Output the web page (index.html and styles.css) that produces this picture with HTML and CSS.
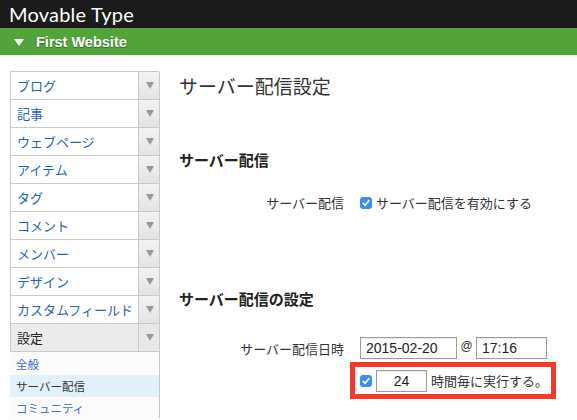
FILE: index.html
```html
<!DOCTYPE html>
<html lang="ja">
<head>
<meta charset="utf-8">
<title>サーバー配信設定 | Movable Type</title>
<link rel="stylesheet" href="styles.css">
</head>
<body>
<header class="topbar"><span class="brand">Movable Type</span></header>
<div class="sitebar"><span class="site-caret"></span><span class="site-name">First Website</span></div>
<div class="layout">
  <nav class="sidebar">
    <ul class="menu">
      <li class="menu-item"><span class="menu-label">ブログ</span><span class="menu-toggle"><i class="caret"></i></span></li>
      <li class="menu-item"><span class="menu-label">記事</span><span class="menu-toggle"><i class="caret"></i></span></li>
      <li class="menu-item"><span class="menu-label">ウェブページ</span><span class="menu-toggle"><i class="caret"></i></span></li>
      <li class="menu-item"><span class="menu-label">アイテム</span><span class="menu-toggle"><i class="caret"></i></span></li>
      <li class="menu-item"><span class="menu-label">タグ</span><span class="menu-toggle"><i class="caret"></i></span></li>
      <li class="menu-item"><span class="menu-label">コメント</span><span class="menu-toggle"><i class="caret"></i></span></li>
      <li class="menu-item"><span class="menu-label">メンバー</span><span class="menu-toggle"><i class="caret"></i></span></li>
      <li class="menu-item"><span class="menu-label">デザイン</span><span class="menu-toggle"><i class="caret"></i></span></li>
      <li class="menu-item"><span class="menu-label">カスタムフィールド</span><span class="menu-toggle"><i class="caret"></i></span></li>
      <li class="menu-item is-open"><span class="menu-label">設定</span><span class="menu-toggle"><i class="caret"></i></span></li>
    </ul>
    <ul class="submenu">
      <li class="sub-item">全般</li>
      <li class="sub-item is-current">サーバー配信</li>
      <li class="sub-item">コミュニティ</li>
    </ul>
  </nav>
  <main class="content">
    <h1 class="page-title">サーバー配信設定</h1>
    <h2 class="section-title first">サーバー配信</h2>
    <div class="field-row row-enable">
      <span class="field-label">サーバー配信</span>
      <div class="field-body">
        <span class="check"><svg viewBox="0 0 12 12" width="12" height="12"><path d="M3.2 6.3 L5.1 8.3 L8.9 3.7" fill="none" stroke="#fff" stroke-width="1.7" stroke-linecap="round" stroke-linejoin="round"/></svg></span>
        <span class="field-text">サーバー配信を有効にする</span>
      </div>
    </div>
    <h2 class="section-title second">サーバー配信の設定</h2>
    <div class="field-row row-date">
      <span class="field-label">サーバー配信日時</span>
      <div class="field-body">
        <span class="text-input date-input">2015-02-20</span>
        <span class="at">@</span>
        <span class="text-input time-input">17:16</span>
      </div>
    </div>
    <div class="field-row row-repeat">
      <span class="field-label"></span>
      <div class="field-body highlight">
        <span class="check"><svg viewBox="0 0 12 12" width="12" height="12"><path d="M3.2 6.3 L5.1 8.3 L8.9 3.7" fill="none" stroke="#fff" stroke-width="1.7" stroke-linecap="round" stroke-linejoin="round"/></svg></span>
        <span class="text-input hours-input">24</span>
        <span class="field-text">時間毎に実行する。</span>
      </div>
    </div>
  </main>
</div>
</body>
</html>
```
FILE: styles.css
```css
* { box-sizing: border-box; }
html, body { margin: 0; padding: 0; }
body {
  width: 577px;
  height: 420px;
  overflow: hidden;
  background: #fff;
  font-family: "Noto Sans CJK JP", "Liberation Sans", sans-serif;
  color: #333;
}
ul { list-style: none; margin: 0; padding: 0; }
h1, h2 { margin: 0; }

.topbar {
  height: 28px;
  background: #1b1b1b;
  padding-left: 9px;
  display: flex;
  align-items: center;
}
.brand {
  font-family: Lato, "Open Sans", sans-serif;
  font-size: 20px;
  color: #fff;
  line-height: 28px;
  letter-spacing: 0.2px;
}
.sitebar {
  height: 27px;
  background: #52a33a;
  display: flex;
  align-items: center;
  padding-left: 14px;
}
.site-caret {
  width: 0; height: 0;
  border-left: 5px solid transparent;
  border-right: 5px solid transparent;
  border-top: 7px solid #fff;
  margin-right: 12px;
  margin-top: 1px;
}
.site-name {
  font-family: "Liberation Sans", Arial, sans-serif;
  font-weight: bold;
  font-size: 14.5px;
  color: #fff;
  text-shadow: 0 1px 1px rgba(0,0,0,0.35);
}

.layout { display: flex; align-items: flex-start; }
.sidebar {
  width: 150px;
  margin-left: 10px;
  margin-top: 16px;
}
.menu {
  border: 1px solid #c9c9c9;
  border-bottom: none;
  border-top-right-radius: 3px;
  overflow: hidden;
}
.menu-item {
  display: flex;
  height: 28px;
  border-bottom: 1px solid #c9c9c9;
  background: #fff;
}
.menu-label {
  flex: 1;
  padding-left: 6px;
  font-size: 13px;
  line-height: 27px;
  color: #1f64b3;
  white-space: nowrap;
  overflow: hidden;
}
.menu-toggle {
  width: 21px;
  border-left: 1px solid #c9c9c9;
  background: linear-gradient(#f3f3f3, #e3e3e3);
  display: flex;
  align-items: center;
  justify-content: center;
}
.caret {
  width: 0; height: 0;
  border-left: 4.5px solid transparent;
  border-right: 4.5px solid transparent;
  border-top: 7px solid #9a9a9a;
  margin-left: 2px;
}
.menu-item.is-open { background: #ebebeb; }
.menu-item.is-open .menu-label { color: #222; }
.menu-item.is-open .menu-toggle { background: #e8e8e8; }

.submenu {
  border-right: 1px solid #c9c9c9;
  background: #fbfbfb;
  padding-top: 1px;
}
.sub-item {
  height: 22px;
  line-height: 22px;
  padding-left: 6px;
  font-size: 11.5px;
  color: #3a6fc2;
}
.sub-item.is-current {
  background: #e2f0f9;
  color: #333;
}

.content {
  margin-left: 19px;
  flex: 1;
}
.page-title {
  font-size: 19px;
  font-weight: normal;
  line-height: 24px;
  color: #333;
  margin-top: 19px;
}
.section-title {
  font-size: 15px;
  font-weight: bold;
  line-height: 20px;
  color: #222;
}
.section-title.first { margin-top: 52px; }
.section-title.second { margin-top: 77px; }

.field-row {
  display: grid;
  grid-template-columns: 165px auto;
  column-gap: 16px;
  align-items: center;
}
.row-enable { margin-top: 23px; }
.row-date { margin-top: 28px; }
.row-repeat { margin-top: 3px; }
.field-label {
  text-align: right;
  font-size: 13px;
  color: #333;
  white-space: nowrap;
}
.field-body {
  display: flex;
  align-items: center;
}
.field-text {
  font-size: 13px;
  color: #333;
  white-space: nowrap;
}
.check {
  width: 12px;
  height: 12px;
  border-radius: 3px;
  background: #3b8ef5;
  display: inline-flex;
  margin-right: 4px;
}
.check svg { display: block; }
.text-input {
  height: 22px;
  border: 1px solid #9c9c9c;
  box-shadow: inset 0 1px 1px rgba(0,0,0,0.08);
  font-family: "Liberation Sans", Arial, sans-serif;
  font-size: 14px;
  color: #222;
  line-height: 20px;
  padding-left: 5px;
  background: #fff;
}
.date-input { width: 97px; }
.time-input { width: 71px; }
.at {
  font-family: "Liberation Sans", Arial, sans-serif;
  font-size: 12px;
  color: #333;
  width: 19px;
  text-align: center;
  align-self: flex-start;
  line-height: 16px;
  margin-top: 1px;
}
.hours-input {
  width: 51px;
  text-align: center;
  padding-left: 0;
  margin-right: 4px;
}
.highlight {
  margin-left: -10px;
  width: 206px;
  height: 37px;
  border: 5px solid #f3392c;
  padding-left: 5px;
}
```
